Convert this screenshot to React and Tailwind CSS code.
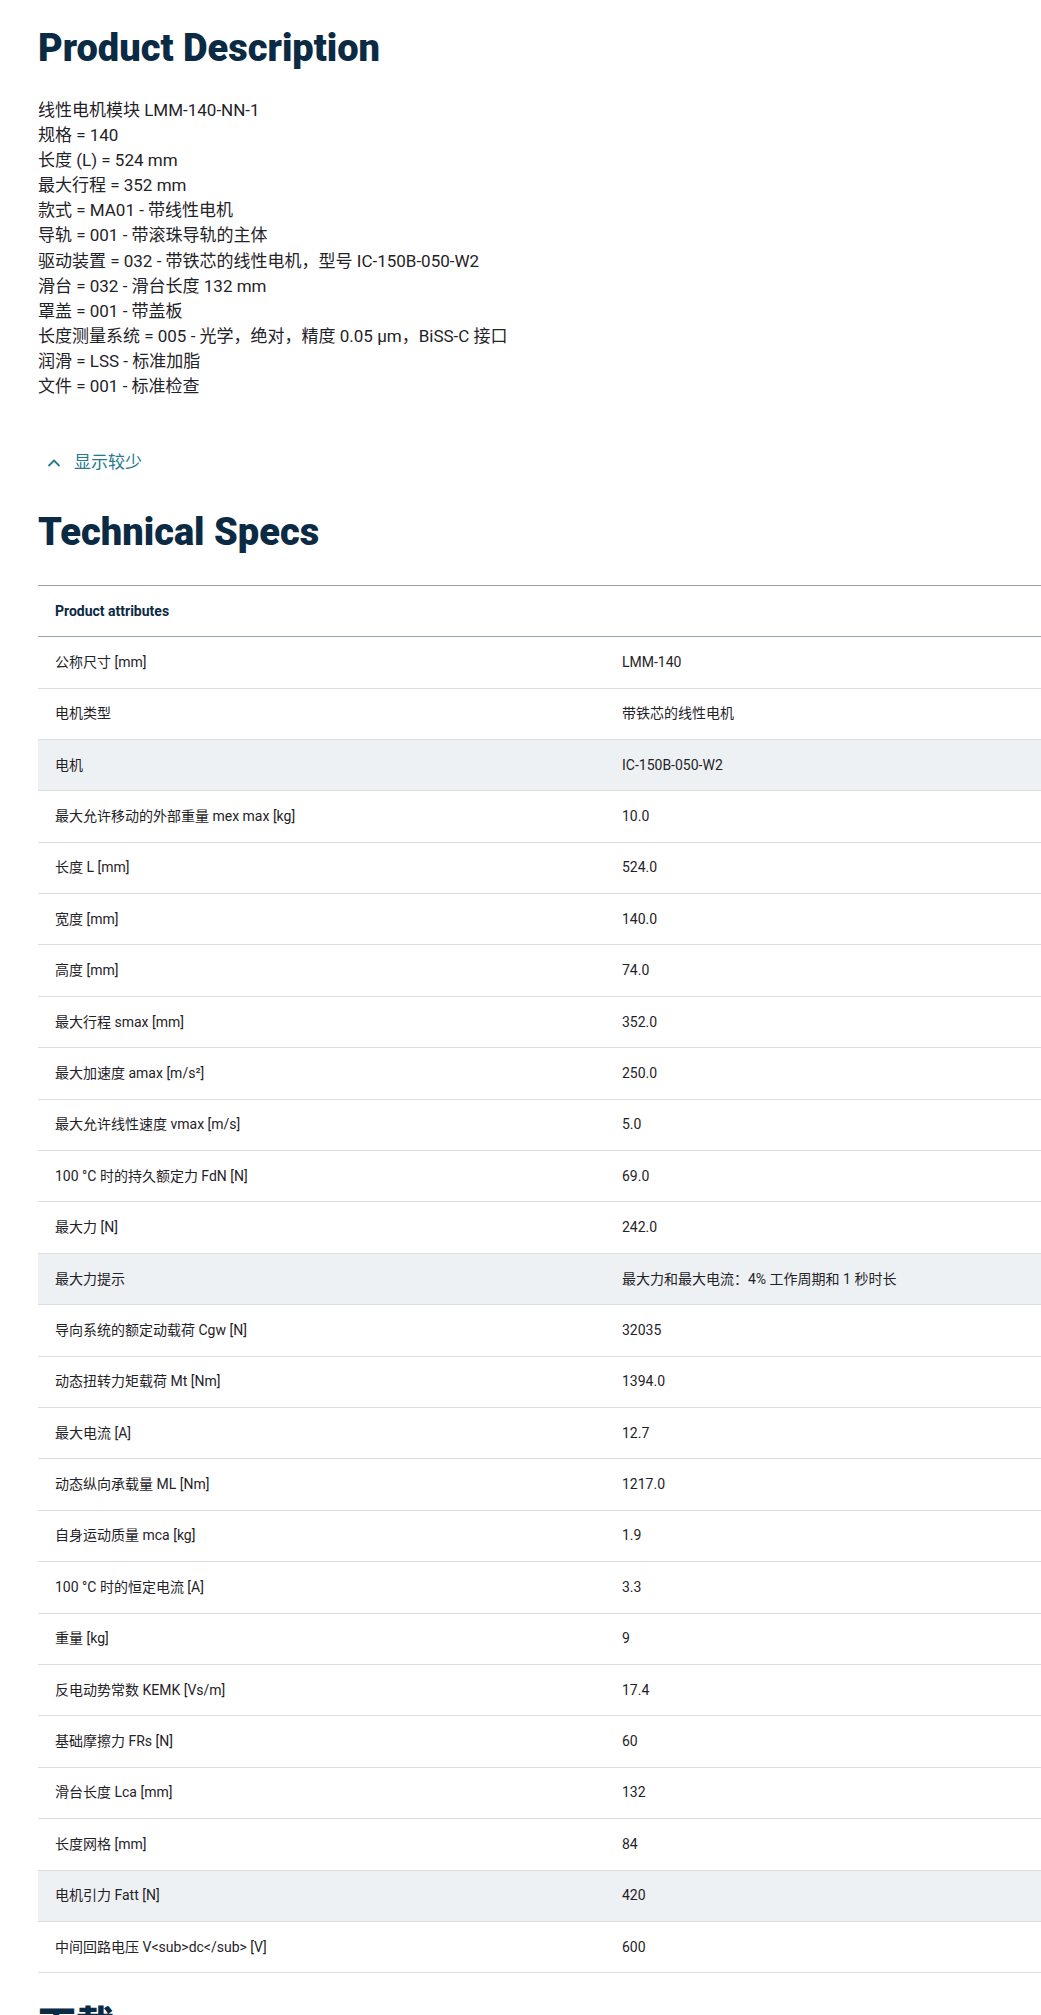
const desc = ["线性电机模块 LMM-140-NN-1","规格 = 140","长度 (L) = 524 mm","最大行程 = 352 mm","款式 = MA01 - 带线性电机","导轨 = 001 - 带滚珠导轨的主体","驱动装置 = 032 - 带铁芯的线性电机，型号 IC-150B-050-W2","滑台 = 032 - 滑台长度 132 mm","罩盖 = 001 - 带盖板","长度测量系统 = 005 - 光学，绝对，精度 0.05 µm，BiSS-C 接口","润滑 = LSS - 标准加脂","文件 = 001 - 标准检查"];
const rows = [
["公称尺寸 [mm]","LMM-140"],["电机类型","带铁芯的线性电机"],["电机","IC-150B-050-W2",1],["最大允许移动的外部重量 mex max [kg]","10.0"],["长度 L [mm]","524.0"],["宽度 [mm]","140.0"],["高度 [mm]","74.0"],["最大行程 smax [mm]","352.0"],["最大加速度 amax [m/s²]","250.0"],["最大允许线性速度 vmax [m/s]","5.0"],["100 °C 时的持久额定力 FdN [N]","69.0"],["最大力 [N]","242.0"],["最大力提示","最大力和最大电流：4% 工作周期和 1 秒时长",1],["导向系统的额定动载荷 Cgw [N]","32035"],["动态扭转力矩载荷 Mt [Nm]","1394.0"],["最大电流 [A]","12.7"],["动态纵向承载量 ML [Nm]","1217.0"],["自身运动质量 mca [kg]","1.9"],["100 °C 时的恒定电流 [A]","3.3"],["重量 [kg]","9"],["反电动势常数 KEMK [Vs/m]","17.4"],["基础摩擦力 FRs [N]","60"],["滑台长度 Lca [mm]","132"],["长度网格 [mm]","84"],["电机引力 Fatt [N]","420",1],["中间回路电压 V<sub>dc</sub> [V]","600"]];
const F = {fontFamily:'Roboto, "Noto Sans CJK SC", sans-serif'};
export default function App(){
  return (
    <div className="pl-[38px] pt-[26px] bg-white text-[#1f2328] h-[2015px] overflow-hidden" style={F}>
      <h1 className="text-[38px] leading-[44px] font-black text-[#0b2a44]">Product Description</h1>
      <div className="mt-[28px] text-[17px] leading-[25.1px]">
        {desc.map((d,i)=><div key={i}>{d}</div>)}
      </div>
      <div className="mt-[52px] flex items-center gap-[12px] h-[24px] pl-[8px] text-[#237a8f] text-[17px]">
        <svg width="16" height="16" viewBox="0 0 16 16" fill="none" stroke="currentColor" strokeWidth="1.8"><path d="M2.5 11 L8 5.5 L13.5 11"/></svg>
        <span>显示较少</span>
      </div>
      <h2 className="mt-[35px] text-[38px] leading-[44px] font-black text-[#0b2a44]">Technical Specs</h2>
      <div className="mt-[31px] border-t border-[#9aa3a9] text-[14px]">
        <div className="h-[51px] flex items-center pl-[17px] font-bold text-[#0b2a44] border-b border-[#9aa3a9]">Product attributes</div>
        {rows.map(([a,b,h],i)=>(
          <div key={i} className={"h-[51.4px] flex items-center border-b border-[#dcdfe2] "+(h?"bg-[#eef1f4]":"")}>
            <div className="w-[584px] pl-[17px]">{a}</div>
            <div>{b}</div>
          </div>
        ))}
      </div>
      <h2 className="mt-[30px] text-[38px] leading-[44px] font-black text-[#0b2a44]">下载</h2>
    </div>
  );
}
